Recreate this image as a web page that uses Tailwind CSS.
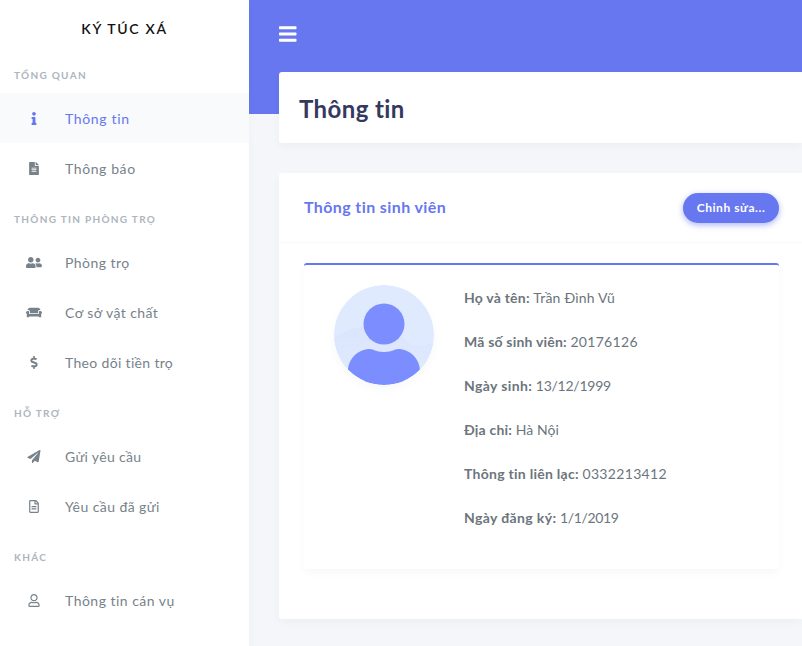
<!DOCTYPE html>
<html lang="vi">
<head>
<meta charset="utf-8">
<title>Ký túc xá</title>
<script src="https://cdn.jsdelivr.net/npm/@tailwindcss/browser@4"></script>
</head>
<body class="h-[646px] overflow-hidden bg-[#f4f6f9] font-[Lato,'Open_Sans',sans-serif] text-sm text-[#6c757d]">
<div class="flex h-full w-[802px] overflow-hidden">
  <aside class="z-10 w-[249px] shrink-0 bg-white shadow-[0_4px_8px_rgba(0,0,0,0.03)]">
    <div class="flex h-[49px] items-center justify-center pt-[9px] text-sm font-semibold tracking-[1.7px] text-[#111]"><span>KÝ TÚC XÁ</span></div>
    <nav>
      <h2 class="h-[44px] pl-[14px] pt-1 text-[10px] leading-[44px] font-bold tracking-[1.3px] text-[#adb5bd]"><span>TỔNG QUAN</span></h2>
      <a class="flex h-[50px] items-center bg-[#f8fafc] pl-[26px] text-[#6777ef]"><svg class="h-[13px] w-4 shrink-0" viewBox="0 0 192 512" fill="currentColor"><path d="M20 424.229h20V279.771H20c-11.046 0-20-8.954-20-20V212c0-11.046 8.954-20 20-20h112c11.046 0 20 8.954 20 20v212.229h20c11.046 0 20 8.954 20 20V492c0 11.046-8.954 20-20 20H20c-11.046 0-20-8.954-20-20v-47.771c0-11.046 8.954-20 20-20zM96 0C56.235 0 24 32.235 24 72s32.235 72 72 72 72-32.235 72-72S135.764 0 96 0z"/></svg><span class="ml-[23px] pt-[2px] tracking-[0.65px]">Thông tin</span></a>
      <a class="flex h-[50px] items-center pl-[26px] text-[#78828a]"><svg class="h-[13px] w-4 shrink-0" viewBox="0 0 384 512" fill="currentColor"><path d="M224 136V0H24C10.7 0 0 10.7 0 24v464c0 13.3 10.7 24 24 24h336c13.3 0 24-10.7 24-24V160H248c-13.2 0-24-10.8-24-24zm64 236c0 6.6-5.4 12-12 12H108c-6.6 0-12-5.4-12-12v-8c0-6.6 5.4-12 12-12h168c6.6 0 12 5.4 12 12v8zm0-64c0 6.6-5.4 12-12 12H108c-6.6 0-12-5.4-12-12v-8c0-6.6 5.4-12 12-12h168c6.6 0 12 5.4 12 12v8zm0-72v8c0 6.6-5.4 12-12 12H108c-6.6 0-12-5.4-12-12v-8c0-6.6 5.4-12 12-12h168c6.6 0 12 5.4 12 12zm96-114.1v6.1H256V0h6.1c6.4 0 12.5 2.5 17 7l97.900 98c4.500 4.500 7 10.600 7 16.900z"/></svg><span class="ml-[23px] pt-[2px] tracking-[0.6px]">Thông báo</span></a>
      <h2 class="h-[44px] pl-[14px] pt-1 text-[10px] leading-[44px] font-bold tracking-[1.3px] text-[#adb5bd]"><span>THÔNG TIN PHÒNG TRỌ</span></h2>
      <a class="flex h-[50px] items-center pl-[26px] text-[#78828a]"><svg class="h-[13px] w-4 shrink-0" viewBox="0 0 640 512" fill="currentColor"><path d="M192 256c61.900 0 112-50.100 112-112S253.900 32 192 32 80 82.100 80 144s50.100 112 112 112zm76.800 32h-8.300c-20.800 10-43.900 16-68.500 16s-47.600-6-68.500-16h-8.300C51.600 288 0 339.600 0 403.200V432c0 26.500 21.500 48 48 48h288c26.500 0 48-21.500 48-48v-28.800c0-63.600-51.600-115.200-115.200-115.200zM480 256c53 0 96-43 96-96s-43-96-96-96-96 43-96 96 43 96 96 96zm48 32h-3.800c-13.900 4.800-28.600 8-44.200 8s-30.300-3.200-44.200-8H432c-20.400 0-39.200 5.900-55.700 15.400 24.400 26.300 39.700 61.200 39.700 99.800v38.400c0 2.200-.5 4.300-.6 6.400H592c26.500 0 48-21.500 48-48 0-61.900-50.100-112-112-112z"/></svg><span class="ml-[23px] pt-[2px] tracking-[0.45px]">Phòng trọ</span></a>
      <a class="flex h-[50px] items-center pl-[26px] text-[#78828a]"><svg class="h-[13px] w-4 shrink-0" viewBox="0 0 640 512" fill="currentColor"><path d="M160 224v64h320v-64c0-35.300 28.700-64 64-64h32c0-53-43-96-96-96H160c-53 0-96 43-96 96h32c35.300 0 64 28.700 64 64zm416-32h-32c-17.700 0-32 14.300-32 32v96H128v-96c0-17.700-14.300-32-32-32H64c-35.300 0-64 28.700-64 64 0 23.600 13 44 32 55.100V432c0 8.800 7.200 16 16 16h64c8.800 0 16-7.200 16-16v-16h384v16c0 8.800 7.200 16 16 16h64c8.800 0 16-7.200 16-16V311.100c19-11 32-31.500 32-55.100 0-35.300-28.700-64-64-64z"/></svg><span class="ml-[23px] pt-[2px] tracking-[0.42px]">Cơ sở vật chất</span></a>
      <a class="flex h-[50px] items-center pl-[26px] text-[#78828a]"><svg class="h-[13px] w-4 shrink-0" viewBox="0 0 288 512" fill="currentColor"><path d="M209.200 233.400l-108-31.600C88.700 198.200 80 186.500 80 173.500c0-16.300 13.200-29.500 29.500-29.500h66.300c12.200 0 24.200 3.700 34.200 10.500 6.100 4.100 14.300 3.100 19.500-2l34.800-34c7.100-6.900 6.100-18.400-1.800-24.500C238 74.800 207.400 64.100 176 64V16c0-8.800-7.200-16-16-16h-32c-8.800 0-16 7.200-16 16v48h-2.500C45.800 64-5.400 118.700.5 183.600c4.200 46.100 39.400 83.600 83.800 96.600l102.500 30c12.500 3.700 21.200 15.300 21.200 28.300 0 16.300-13.200 29.500-29.500 29.500h-66.300C100 368 88 364.300 78 357.500c-6.100-4.100-14.300-3.100-19.500 2l-34.800 34c-7.100 6.900-6.100 18.400 1.800 24.500 24.500 19.200 55.100 29.900 86.500 30v48c0 8.800 7.200 16 16 16h32c8.800 0 16-7.200 16-16v-48.200c46.600-.9 90.300-28.600 105.700-72.700 21.500-61.600-14.600-124.800-72.500-141.700z"/></svg><span class="ml-[23px] pt-[2px] tracking-[0.33px]">Theo dõi tiền trọ</span></a>
      <h2 class="h-[44px] pl-[14px] pt-1 text-[10px] leading-[44px] font-bold tracking-[1.3px] text-[#adb5bd]"><span>HỖ TRỢ</span></h2>
      <a class="flex h-[50px] items-center pl-[26px] text-[#78828a]"><svg class="h-[13px] w-4 shrink-0" viewBox="0 0 512 512" fill="currentColor"><path d="M476 3.200L12.500 270.600c-18.100 10.400-15.800 35.600 2.200 43.200L121 358.400l287.300-253.200c5.500-4.900 13.300 2.600 8.600 8.300L176 407v80.500c0 23.600 28.500 32.900 42.500 15.800L282 426l124.600 52.200c14.200 6 30.400-2.900 33-18.200l72-432C515 7.800 493.300-6.800 476 3.200z"/></svg><span class="ml-[23px] pt-[2px] tracking-[0.32px]">Gửi yêu cầu</span></a>
      <a class="flex h-[50px] items-center pl-[26px] text-[#78828a]"><svg class="h-[13px] w-4 shrink-0" viewBox="0 0 384 512" fill="currentColor"><path d="M288 248v28c0 6.600-5.400 12-12 12H108c-6.600 0-12-5.400-12-12v-28c0-6.600 5.400-12 12-12h168c6.600 0 12 5.400 12 12zm-12 72H108c-6.600 0-12 5.400-12 12v28c0 6.600 5.400 12 12 12h168c6.600 0 12-5.400 12-12v-28c0-6.600-5.400-12-12-12zm108-188.100V464c0 26.500-21.500 48-48 48H48c-26.500 0-48-21.500-48-48V48C0 21.500 21.500 0 48 0h204.100C264.800 0 277 5.100 286 14.100L369.900 98c9 8.900 14.100 21.200 14.100 33.900zm-128-80V128h76.100L256 51.900zM336 464V176H232c-13.300 0-24-10.700-24-24V48H48v416h288z"/></svg><span class="ml-[23px] pt-[2px] tracking-[0.42px]">Yêu cầu đã gửi</span></a>
      <h2 class="h-[44px] pl-[14px] pt-1 text-[10px] leading-[44px] font-bold tracking-[1.3px] text-[#adb5bd]"><span>KHÁC</span></h2>
      <a class="flex h-[50px] items-center pl-[26px] text-[#78828a]"><svg class="h-[13px] w-4 shrink-0" viewBox="0 0 448 512" fill="currentColor"><path d="M313.600 304c-28.700 0-42.500 16-89.600 16-47.100 0-60.800-16-89.600-16C60.200 304 0 364.200 0 438.400V464c0 26.500 21.500 48 48 48h352c26.500 0 48-21.500 48-48v-25.600c0-74.200-60.200-134.400-134.400-134.400zM400 464H48v-25.600c0-47.600 38.800-86.400 86.400-86.400 14.600 0 38.300 16 89.600 16 51.700 0 74.900-16 89.600-16 47.600 0 86.400 38.800 86.400 86.400V464zM224 288c79.500 0 144-64.500 144-144S303.500 0 224 0 80 64.500 80 144s64.500 144 144 144zm0-240c52.900 0 96 43.100 96 96s-43.100 96-96 96-96-43.100-96-96 43.100-96 96-96z"/></svg><span class="ml-[23px] pt-[2px] tracking-[0.48px]">Thông tin cán vụ</span></a>
    </nav>
  </aside>
  <main class="min-w-0 flex-1 bg-[linear-gradient(#6777ef_114px,#f4f6f9_114px)] pl-[30px]">
    <header class="flex h-[72px] items-center pb-1"><svg class="h-5 w-[17.5px]" viewBox="0 0 448 512" fill="white"><path d="M16 132h416c8.837 0 16-7.163 16-16V76c0-8.837-7.163-16-16-16H16C7.163 60 0 67.163 0 76v40c0 8.837 7.163 16 16 16zm0 160h416c8.837 0 16-7.163 16-16v-40c0-8.837-7.163-16-16-16H16c-8.837 0-16 7.163-16 16v40c0 8.837 7.163 16 16 16zm0 160h416c8.837 0 16-7.163 16-16v-40c0-8.837-7.163-16-16-16H16c-8.837 0-16 7.163-16 16v40c0 8.837 7.163 16 16 16z"/></svg></header>
    <div class="flex h-[71px] items-center rounded-l-[3px] bg-white pt-[2px] pl-5 shadow-[0_4px_8px_rgba(0,0,0,0.03)]"><h1 class="text-2xl font-bold tracking-[0.4px] text-[#34395e]"><span>Thông tin</span></h1></div>
    <section class="mt-[30px] h-[446px] rounded-l-[3px] bg-white shadow-[0_4px_8px_rgba(0,0,0,0.03)]">
      <div class="flex h-[70px] items-center justify-between border-b border-[#f9f9f9] pr-[23px] pl-[25px]">
        <h2 class="pb-[2px] text-base font-bold tracking-[0.39px] text-[#6777ef]"><span>Thông tin sinh viên</span></h2>
        <button class="h-[30px] w-24 rounded-full bg-[#6777ef] text-xs font-bold tracking-[0.55px] text-white shadow-[0_2px_6px_#acb5f6]"><span>Chỉnh sửa...</span></button>
      </div>
      <div class="mt-5 mr-[23px] ml-[25px] flex h-[306px] rounded-[3px] border-t-2 border-[#6777ef] bg-white pt-5 pl-[30px] shadow-[0_4px_8px_rgba(0,0,0,0.03)]">
        <svg class="h-[100px] w-[100px] shrink-0 rounded-full shadow-[0_4px_8px_rgba(0,0,0,0.03)]" viewBox="0 0 100 100"><defs><clipPath id="disc"><circle cx="50" cy="50" r="50"/></clipPath><linearGradient id="wave" x1="0" y1="0" x2="0" y2="1"><stop offset="0" stop-color="#dae5fd"/><stop offset="1" stop-color="#dfeaff"/></linearGradient></defs><g clip-path="url(#disc)"><rect width="100" height="100" fill="#dfeaff"/><path d="M0 53C14 43 28 40 42 42C62 44 67 52 77 59C85 62 94 60 100 57V85H0Z" fill="url(#wave)"/><circle cx="50" cy="39" r="20.500" fill="#7c8eff"/><path d="M14 100V86C14 74 24 64 36 64C40 64 41 67 50 67C59 67 60 64 64 64C76 64 86 74 86 86V100Z" fill="#7c8eff"/></g></svg>
        <div class="ml-[30px] flex flex-col gap-5 pt-px leading-6">
          <p><b class="tracking-[0.22px]">Họ và tên:</b> <span class="tracking-[0.2px]">Trần Đình Vũ</span></p>
          <p><b class="tracking-[0.2px]">Mã số sinh viên:</b> <span class="tracking-[0.3px]">20176126</span></p>
          <p><b class="tracking-[0.38px]">Ngày sinh:</b> <span class="tracking-[-0.25px]">13/12/1999</span></p>
          <p><b class="tracking-[0.2px]">Địa chỉ:</b> <span class="tracking-[0.05px]">Hà Nội</span></p>
          <p><b class="tracking-[0.27px]">Thông tin liên lạc:</b> <span class="tracking-[0.33px]">0332213412</span></p>
          <p><b class="tracking-[0.38px]">Ngày đăng ký:</b> <span class="tracking-[-0.35px]">1/1/2019</span></p>
        </div>
      </div>
    </section>
  </main>
</div>
</body>
</html>
